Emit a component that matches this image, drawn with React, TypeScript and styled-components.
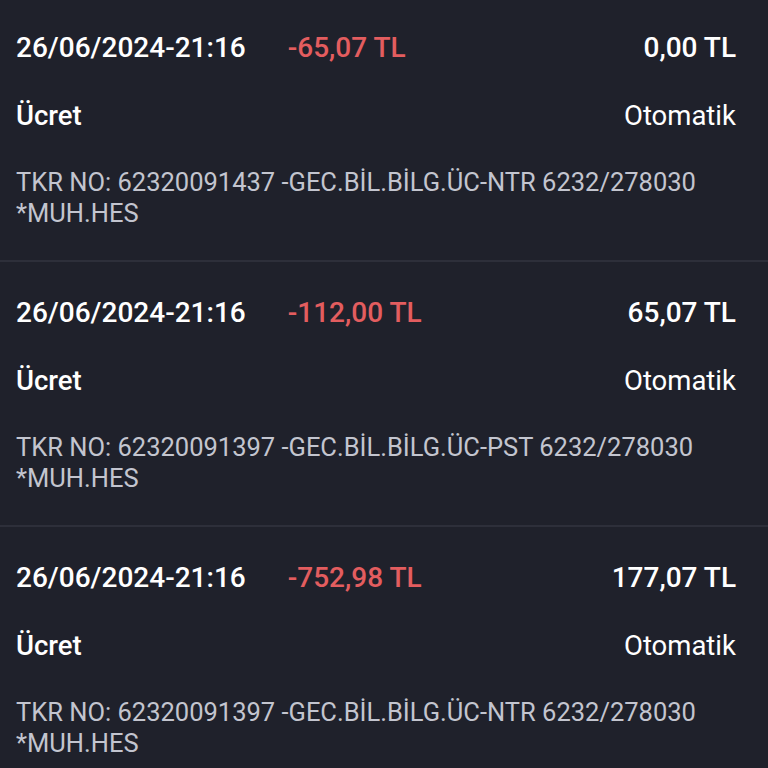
import styled, { createGlobalStyle } from "styled-components";

const GlobalStyle = createGlobalStyle`
  html, body {
    margin: 0;
    padding: 0;
    background: #1f212b;
  }
  body {
    font-family: Roboto, "Noto Sans", "Liberation Sans", sans-serif;
    -webkit-font-smoothing: antialiased;
  }
`;

type Movement = {
  date: string;
  amount: string;
  balance: string;
  type: string;
  channel: string;
  description: string;
};

const movements: Movement[] = [
  {
    date: "26/06/2024-21:16",
    amount: "-65,07 TL",
    balance: "0,00 TL",
    type: "Ücret",
    channel: "Otomatik",
    description:
      "TKR NO: 62320091437 -GEC.BİL.BİLG.ÜC-NTR 6232/278030 *MUH.HES",
  },
  {
    date: "26/06/2024-21:16",
    amount: "-112,00 TL",
    balance: "65,07 TL",
    type: "Ücret",
    channel: "Otomatik",
    description:
      "TKR NO: 62320091397 -GEC.BİL.BİLG.ÜC-PST 6232/278030 *MUH.HES",
  },
  {
    date: "26/06/2024-21:16",
    amount: "-752,98 TL",
    balance: "177,07 TL",
    type: "Ücret",
    channel: "Otomatik",
    description:
      "TKR NO: 62320091397 -GEC.BİL.BİLG.ÜC-NTR 6232/278030 *MUH.HES",
  },
];

export default function App() {
  return (
    <>
      <GlobalStyle />
      <Screen>
        <List>
          {movements.map((m, i) => (
            <Item key={i}>
              <TopRow>
                <DateText>{m.date}</DateText>
                <Amount>{m.amount}</Amount>
                <Balance>{m.balance}</Balance>
              </TopRow>
              <MidRow>
                <TypeText>{m.type}</TypeText>
                <Channel>{m.channel}</Channel>
              </MidRow>
              <Description>{m.description}</Description>
            </Item>
          ))}
        </List>
      </Screen>
    </>
  );
}

const Screen = styled.div`
  width: 768px;
  height: 768px;
  overflow: hidden;
  background: #1f212b;
`;

const List = styled.div`
  display: flex;
  flex-direction: column;
  margin-top: -3px;
`;

const Item = styled.div`
  display: flex;
  flex-direction: column;
  padding: 34px 32px 31px 16px;
  border-bottom: 2px solid #2d2f3a;
`;

const TopRow = styled.div`
  display: flex;
  align-items: center;
  gap: 42px;
  font-size: 28px;
  line-height: 33px;
  font-weight: 500;
`;

const DateText = styled.span`
  color: #ffffff;
`;

const Amount = styled.span`
  color: #e35d5f;
`;

const Balance = styled.span`
  color: #ffffff;
  margin-left: auto;
`;

const MidRow = styled.div`
  display: flex;
  justify-content: space-between;
  align-items: center;
  margin-top: 36px;
  font-size: 27.5px;
  line-height: 32px;
  color: #ffffff;
`;

const TypeText = styled.span`
  font-weight: 500;
`;

const Channel = styled.span`
  font-weight: 400;
`;

const Description = styled.p`
  margin: 35px 0 0;
  font-size: 25.5px;
  line-height: 31px;
  color: #c3c5cf;
  font-weight: 400;
`;
